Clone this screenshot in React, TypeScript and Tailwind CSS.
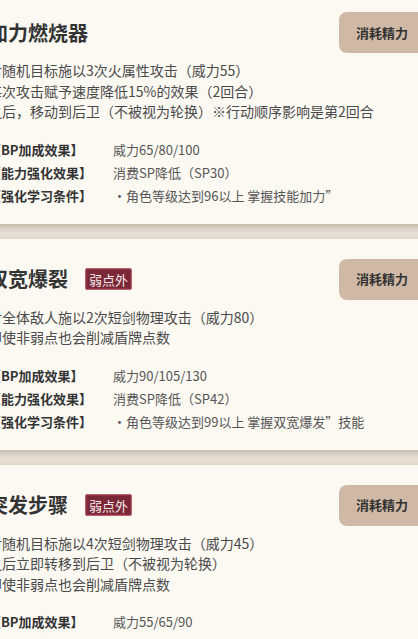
import React from "react";

type Stat = { label: string; value: string };
type Skill = {
  title: string;
  badge?: boolean;
  lines: string[];
  stats: Stat[];
};

const skills: Skill[] = [
  {
    title: "加力燃烧器",
    lines: [
      "对随机目标施以3次火属性攻击（威力55）",
      "每次攻击赋予速度降低15%的效果（2回合）",
      "之后，移动到后卫（不被视为轮换）※行动顺序影响是第2回合",
    ],
    stats: [
      { label: "【BP加成效果】", value: "威力65/80/100" },
      { label: "【能力强化效果】", value: "消费SP降低（SP30）" },
      { label: "【强化学习条件】", value: "・角色等级达到96以上 掌握技能加力”" },
    ],
  },
  {
    title: "双宽爆裂",
    badge: true,
    lines: ["对全体敌人施以2次短剑物理攻击（威力80）", "即使非弱点也会削减盾牌点数"],
    stats: [
      { label: "【BP加成效果】", value: "威力90/105/130" },
      { label: "【能力强化效果】", value: "消费SP降低（SP42）" },
      { label: "【强化学习条件】", value: "・角色等级达到99以上 掌握双宽爆发”技能" },
    ],
  },
  {
    title: "突发步骤",
    badge: true,
    lines: [
      "对随机目标施以4次短剑物理攻击（威力45）",
      "之后立即转移到后卫（不被视为轮换）",
      "即使非弱点也会削减盾牌点数",
    ],
    stats: [
      { label: "【BP加成效果】", value: "威力55/65/90" },
      { label: "【能力强化效果】", value: "消费SP降低（SP28）" },
      { label: "【强化学习条件】", value: "・角色等级达到90以上" },
    ],
  },
];

function Card({ s }: { s: Skill }) {
  return (
    <div className="bg-[#fcf9f3] pl-5 pr-5 pt-5 pb-[17px] shadow-[0_3px_5px_rgba(110,95,75,0.28)]">
      <div className="flex h-[41px] items-center justify-between">
        <div className="flex items-center">
          <span className="text-[20px] font-bold leading-7 text-[#333]">{s.title}</span>
          {s.badge && (
            <span className="ml-[17px] flex h-[22px] items-center rounded-[2px] border border-[#b85d70] bg-[#7a2838] px-[3px] text-[13px] leading-none text-[#f6e9ec] shadow-[inset_0_0_0_1px_#8f3447]">
              弱点外
            </span>
          )}
        </div>
        <div className="flex h-[41px] items-center rounded-lg bg-[#cfb9a6] px-[17px] text-[13px] font-bold text-[#333]">
          消耗精力
        </div>
      </div>
      <div className="mt-[7px] text-[14px] leading-[20.5px] text-[#4a4a4a]">
        {s.lines.map((l, i) => (
          <div key={i}>{l}</div>
        ))}
      </div>
      <div className="mt-4 grid grid-cols-[125px_1fr] text-[13px] leading-[23px]">
        {s.stats.map((st, i) => (
          <React.Fragment key={i}>
            <div className="font-bold text-[#333]">{st.label}</div>
            <div className="text-[#555]">{st.value}</div>
          </React.Fragment>
        ))}
      </div>
    </div>
  );
}

export default function App() {
  return (
    <div
      className="h-[639px] w-[418px] overflow-hidden bg-[#e4ddd1]"
      style={{ fontFamily: '"Noto Sans CJK SC", "Noto Sans", sans-serif' }}
    >
      <div className="ml-[-32px] mt-[-8px] flex w-[477px] flex-col gap-[15px]">
        {skills.map((s, i) => (
          <Card key={i} s={s} />
        ))}
      </div>
    </div>
  );
}
